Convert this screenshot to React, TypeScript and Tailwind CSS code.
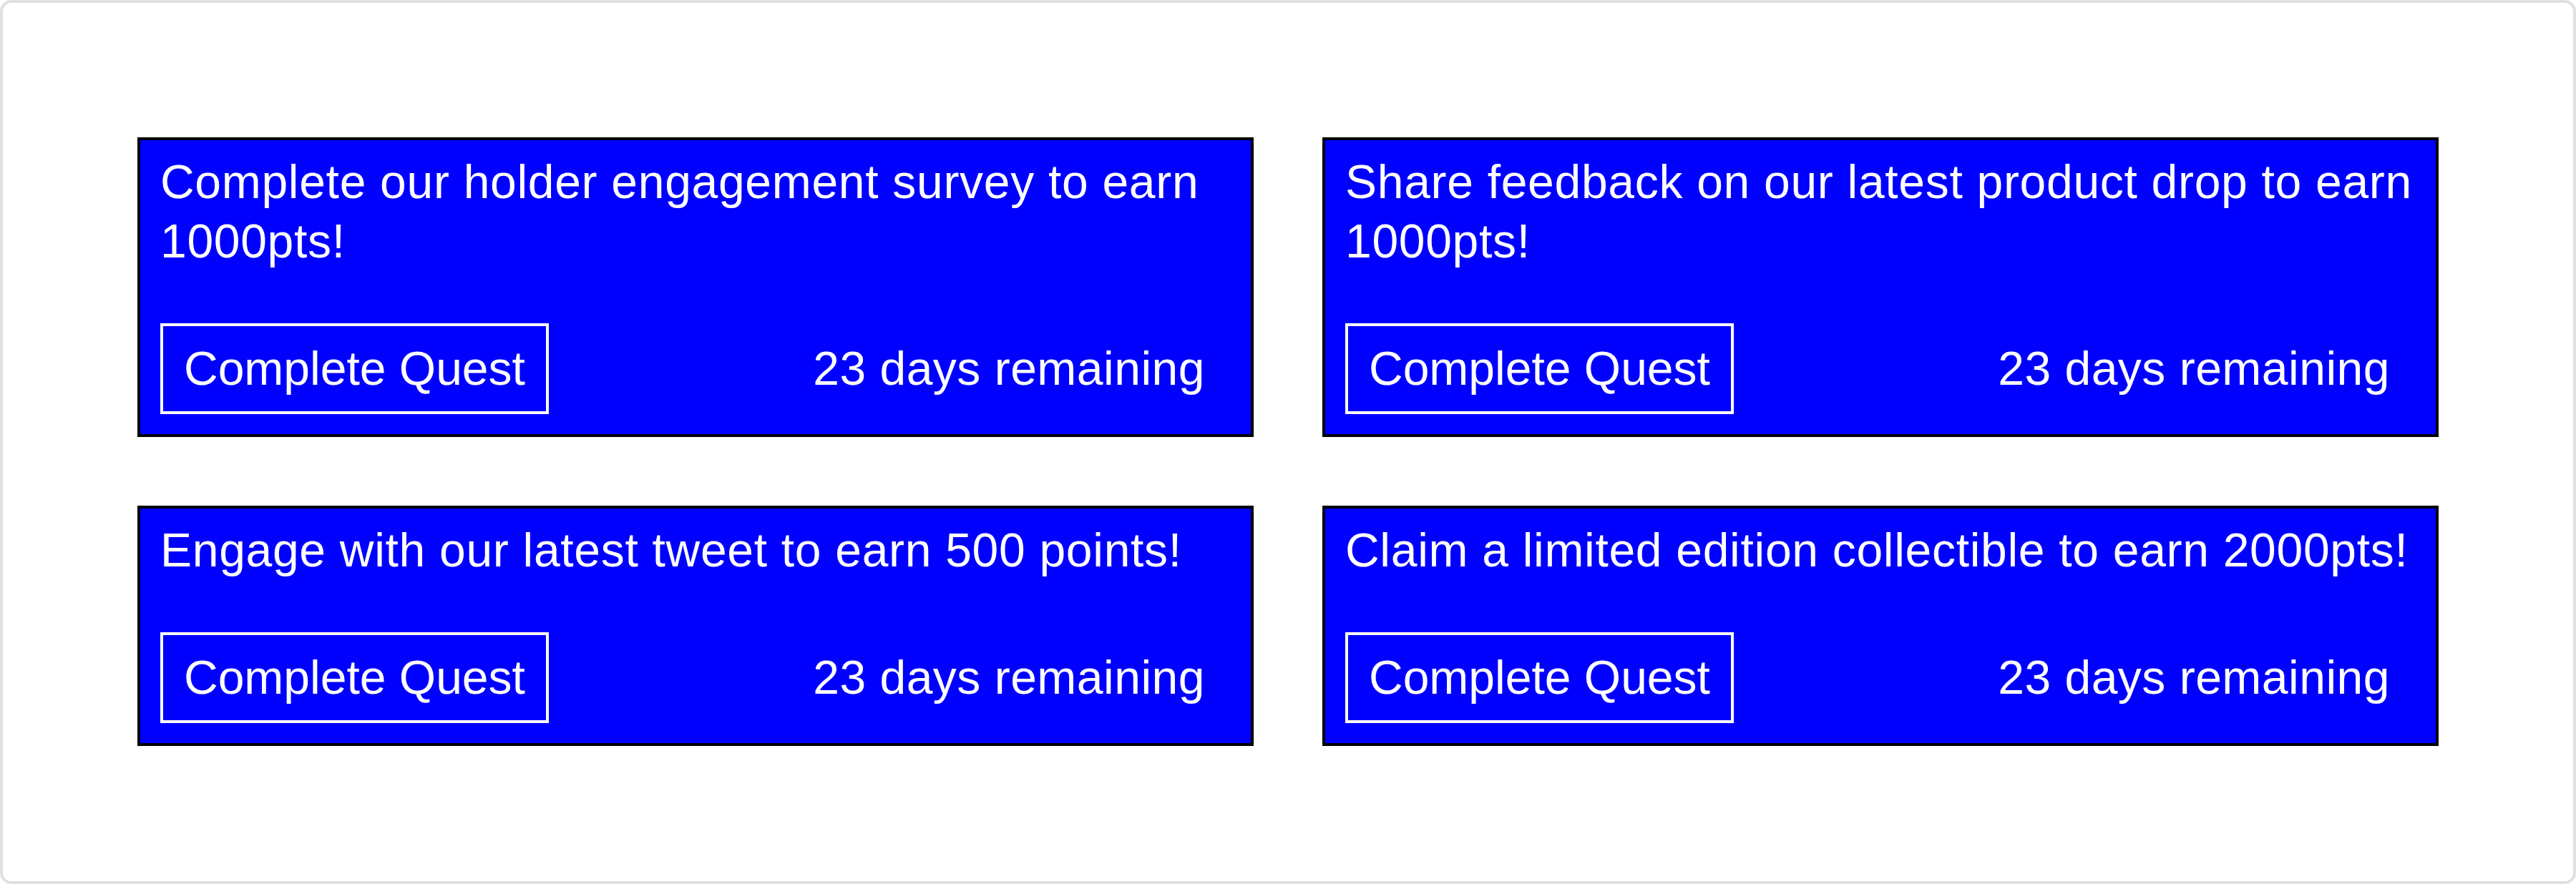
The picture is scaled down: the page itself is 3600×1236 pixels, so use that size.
import React from "react";

const quests = [
  "Complete our holder engagement survey to earn 1000pts!",
  "Share feedback on our latest product drop to earn 1000pts!",
  "Engage with our latest tweet to earn 500 points!",
  "Claim a limited edition collectible to earn 2000pts!",
];

function QuestCard({ title }: { title: string }) {
  return (
    <div className="border-4 border-black bg-[#0000ff] pt-[17px] pb-[28px] pl-[28px] pr-[24px] text-white">
      <p className="text-[66px] leading-[83px] tracking-[0.7px]">{title}</p>
      <div className="mt-[73px] flex items-center justify-between pr-[40px]">
        <button className="border-4 border-white px-[29px] py-[18px] text-[66px] leading-[83px] text-white">
          Complete Quest
        </button>
        <span className="text-[66px] leading-[83px] tracking-[0.5px]">23 days remaining</span>
      </div>
    </div>
  );
}

export default function App() {
  return (
    <div className="box-border h-[1236px] w-[3600px] rounded-[16px] border-4 border-[#e0e0e0] bg-white px-[188px] pt-[188px] font-['Liberation_Sans',Arial,sans-serif]">
      <div className="grid grid-cols-2 gap-x-[96px] gap-y-[96px]">
        {quests.map((q) => (
          <QuestCard key={q} title={q} />
        ))}
      </div>
    </div>
  );
}
